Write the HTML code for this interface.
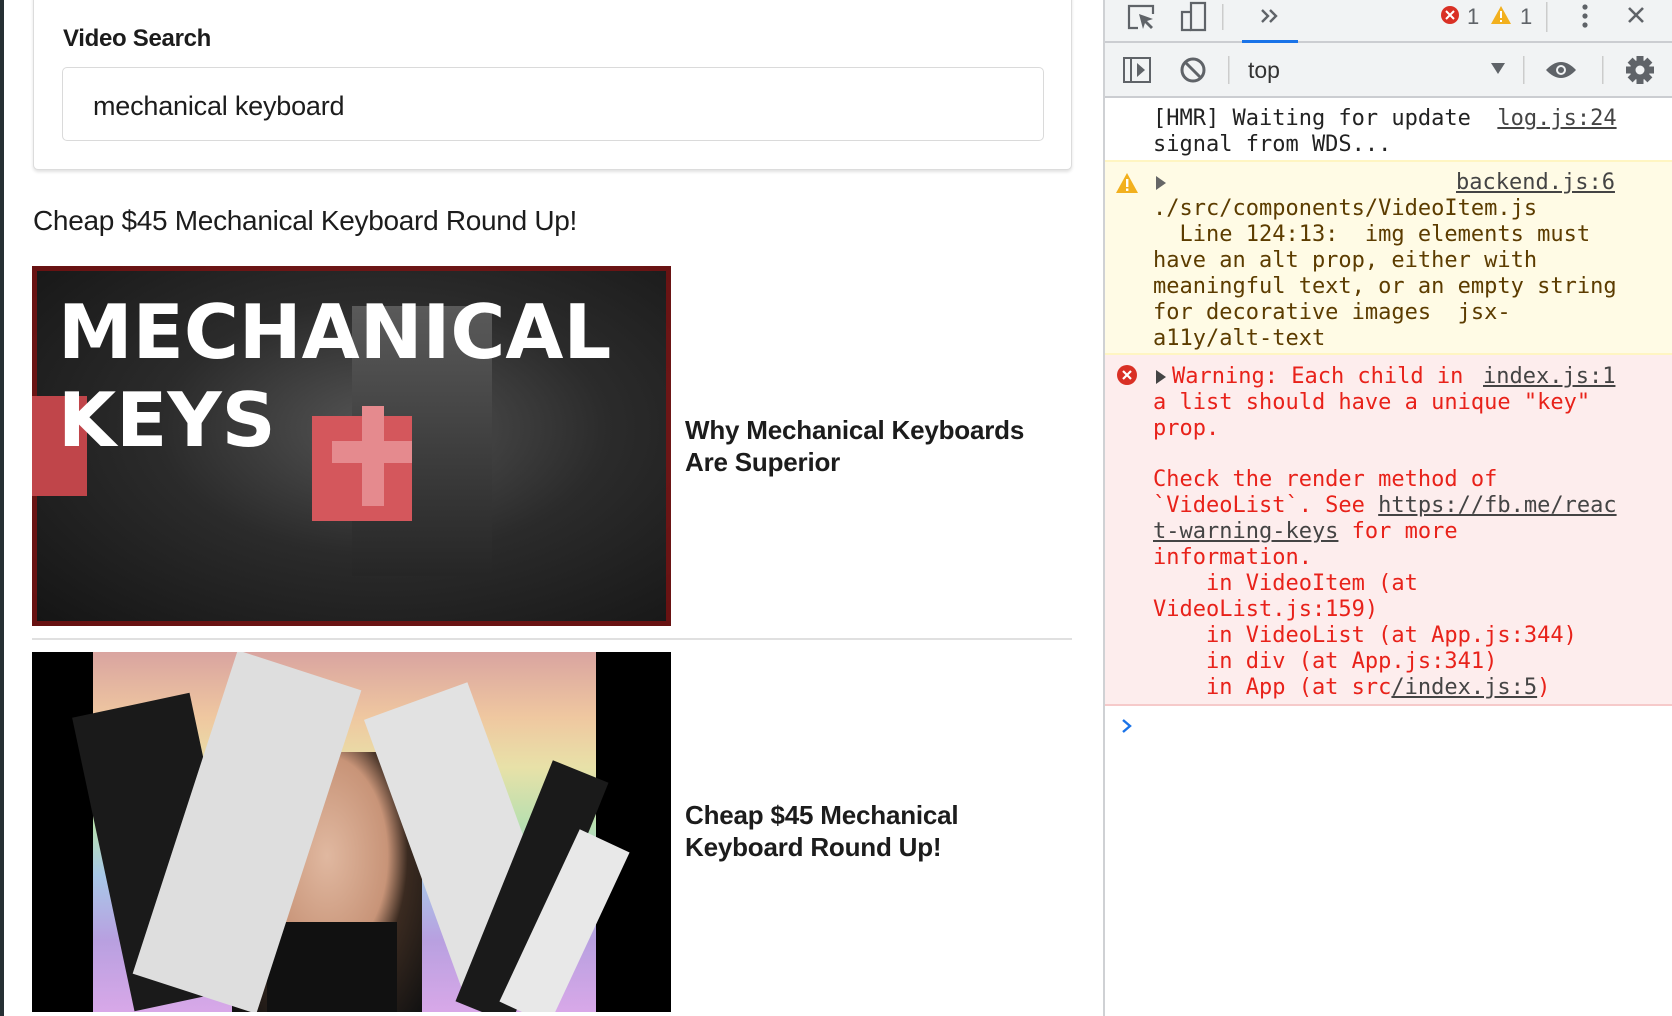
<!DOCTYPE html>
<html><head><meta charset="utf-8"><style>
*{margin:0;padding:0;box-sizing:border-box}
body{width:1672px;height:1016px;overflow:hidden;background:#fff;position:relative;font-family:"Liberation Sans",sans-serif}
.abs{position:absolute}
.strip{left:0;top:0;width:4px;height:1016px;background:#263034}
.card{left:33px;top:-10px;width:1039px;height:180px;border:1px solid #dcdcdc;border-radius:5px;box-shadow:0 2px 3px rgba(0,0,0,.12);background:#fff}
.lbl{left:63px;top:25px;font-size:24px;font-weight:bold;color:#1c1c1c;letter-spacing:-0.3px}
.inp{left:62px;top:67px;width:982px;height:74px;border:1.5px solid #dadada;border-radius:5px}
.inpt{left:93px;top:91px;font-size:27px;color:#1c1c1c;letter-spacing:-0.2px}
.title{left:33px;top:205px;font-size:28px;color:#1c1c1c;letter-spacing:-0.3px}
.vt{font-size:26px;font-weight:bold;color:#1c1c1c;line-height:32px;letter-spacing:-0.2px}
.div{left:32px;top:638px;width:1040px;height:2px;background:#e0e0e0}
.vr{left:1103px;top:0;width:2px;height:1016px;background:#cfd1d4}
.dt{left:1105px;top:0;width:567px;height:1016px;background:#fff}
.tb{left:1105px;width:567px;background:#f1f3f4;border-bottom:2px solid #cbcdd1}
.mono{font-family:"DejaVu Sans Mono",monospace;font-size:22px;white-space:pre;line-height:26px}
.ln{position:absolute;left:1153px}
.u{text-decoration:underline;color:#444}
.red{color:#e8221a}
.brn{color:#5c3c00}
</style></head><body>
<div class="abs strip"></div>
<div class="abs card"></div>
<div class="abs lbl">Video Search</div>
<div class="abs inp"></div>
<div class="abs inpt">mechanical keyboard</div>
<div class="abs title">Cheap $45 Mechanical Keyboard Round Up!</div>

<div class="abs" style="left:32px;top:266px;width:639px;height:360px;background:radial-gradient(ellipse at 55% 45%,#555 0%,#2b2b2b 45%,#141414 100%);overflow:hidden">
 <div class="abs" style="left:0;top:0;right:0;bottom:0;border:5px solid #8a1010;opacity:.7"></div>
 <div class="abs" style="left:320px;top:40px;width:140px;height:270px;background:linear-gradient(#5a5a5a,#262626)"></div>
 <div class="abs" style="left:0;top:130px;width:55px;height:100px;background:#c0454a"></div>
 <div class="abs" style="left:280px;top:150px;width:100px;height:105px;background:#d4575c"></div>
 <div class="abs" style="left:330px;top:140px;width:22px;height:100px;background:#e58a8e"></div>
 <div class="abs" style="left:300px;top:175px;width:80px;height:22px;background:#e58a8e"></div>
 <div class="abs" style="left:26px;top:22px;font-family:'DejaVu Sans',sans-serif;font-weight:bold;font-size:75px;color:#fff;line-height:88px">MECHANICAL<br>KEYS</div>
</div>
<div class="abs vt" style="left:685px;top:414px">Why Mechanical Keyboards<br>Are Superior</div>
<div class="abs div"></div>

<div class="abs" style="left:32px;top:652px;width:639px;height:360px;background:#000;overflow:hidden">
 <div class="abs" style="left:61px;top:0;width:503px;height:360px;background:linear-gradient(180deg,#d9a4a0 0%,#efc7a0 18%,#e8e1a8 32%,#b8e0b0 48%,#a8c8e8 62%,#b8a0e0 80%,#d8a8e8 100%)"></div>
 <div class="abs" style="left:200px;top:100px;width:190px;height:260px;background:radial-gradient(ellipse at 50% 40%,#e0b8a0 0%,#c89478 45%,#3a2a20 60%,#111 100%)"></div>
 <div class="abs" style="left:235px;top:270px;width:130px;height:90px;background:#111"></div>
 <div class="abs" style="left:70px;top:50px;width:120px;height:300px;background:#1a1a1a;transform:rotate(-12deg)"></div>
 <div class="abs" style="left:150px;top:10px;width:130px;height:340px;background:#dedede;transform:rotate(18deg)"></div>
 <div class="abs" style="left:380px;top:40px;width:110px;height:300px;background:#e2e2e2;transform:rotate(-20deg)"></div>
 <div class="abs" style="left:470px;top:110px;width:60px;height:260px;background:#1a1a1a;transform:rotate(22deg)"></div>
 <div class="abs" style="left:505px;top:180px;width:55px;height:190px;background:#e8e8e8;transform:rotate(25deg)"></div>
</div>
<div class="abs vt" style="left:685px;top:799px">Cheap $45 Mechanical<br>Keyboard Round Up!</div>

<div class="abs vr"></div>
<div class="abs dt"></div>
<div class="abs tb" style="top:0;height:43px"></div>
<div class="abs" style="left:1242px;top:40px;width:56px;height:3px;background:#1a73e8"></div>
<div class="abs tb" style="top:43px;height:55px"></div>

<svg class="abs" style="left:1105px;top:0" width="567" height="98" viewBox="0 0 567 98">
 <g fill="none" stroke="#5f6368" stroke-width="2.2">
  <path d="M33 28 h-9 v-22 h24 v8"/>
  <path d="M86 3 h14 v27 h-14 z" /><path d="M86 12 h-9 v18 h9"/>
 </g>
 <path d="M34 14 l14 5 -6 2 6 6 -2 2 -6 -6 -2 6z" fill="#5f6368"/>
 <path d="M157 10 l6 6 -6 6 M165 10 l6 6 -6 6" fill="none" stroke="#5f6368" stroke-width="2.4"/>
 <circle cx="345" cy="15" r="9" fill="#d93025"/>
 <path d="M341 11 l8 8 M349 11 l-8 8" stroke="#fff" stroke-width="2"/>
 <text x="362" y="24" font-family="Liberation Sans" font-size="22" fill="#5f6368">1</text>
 <path d="M396 6 l10 18 h-20z" fill="#f2b01e"/>
 <rect x="395" y="11" width="2" height="7" fill="#fff"/><rect x="395" y="20" width="2" height="2" fill="#fff"/>
 <text x="415" y="24" font-family="Liberation Sans" font-size="22" fill="#5f6368">1</text>
 <rect x="117" y="4" width="1.5" height="26" fill="#ccc"/>
 <rect x="441" y="2" width="1.5" height="30" fill="#ccc"/>
 <circle cx="480" cy="7" r="2.6" fill="#5f6368"/><circle cx="480" cy="16" r="2.6" fill="#5f6368"/><circle cx="480" cy="25" r="2.6" fill="#5f6368"/>
 <path d="M524 8 l14 14 M538 8 l-14 14" stroke="#5f6368" stroke-width="2.6"/>
 <rect x="19" y="58" width="26" height="24" fill="none" stroke="#5f6368" stroke-width="2"/>
 <rect x="25" y="58" width="2" height="24" fill="#5f6368"/>
 <path d="M32 63 l8 7 -8 7z" fill="#5f6368"/>
 <circle cx="88" cy="70" r="11" fill="none" stroke="#5f6368" stroke-width="3"/>
 <path d="M80 62 l16 16" stroke="#5f6368" stroke-width="3"/>
 <rect x="123" y="56" width="1.5" height="28" fill="#ccc"/>
 <text x="143" y="78" font-family="Liberation Sans" font-size="23" fill="#333">top</text>
 <path d="M386 63 h14 l-7 11z" fill="#5f6368"/>
 <rect x="418" y="56" width="1.5" height="28" fill="#ccc"/>
 <path d="M441 70 q15 -16 30 0 q-15 16 -30 0z" fill="#5f6368"/>
 <circle cx="456" cy="70" r="5" fill="#f1f3f4"/><circle cx="456" cy="70" r="3" fill="#5f6368"/>
 <rect x="497" y="56" width="1.5" height="28" fill="#ccc"/>
 <g transform="translate(535 70)" fill="#5f6368">
  <circle r="10"/>
  <rect x="-3.5" y="-14" width="7" height="28"/>
  <rect x="-3.5" y="-14" width="7" height="28" transform="rotate(45)"/>
  <rect x="-3.5" y="-14" width="7" height="28" transform="rotate(90)"/>
  <rect x="-3.5" y="-14" width="7" height="28" transform="rotate(135)"/>
  <circle r="4.5" fill="#f1f3f4"/>
 </g>
</svg>

<div class="mono">
 <div class="ln" style="top:106px;color:#222">[HMR] Waiting for update  <span class="u">log.js:24</span></div>
 <div class="ln" style="top:132px;color:#222">signal from WDS...</div>
</div>

<div class="abs" style="left:1105px;top:160px;width:567px;height:195px;background:#fffbe5;border-top:2px solid #fff5c2;border-bottom:2px solid #fff5c2"></div>
<svg class="abs" style="left:1115px;top:172px" width="24" height="22"><path d="M12 1 l11 20 h-22z" fill="#f2b01e"/><rect x="11" y="7" width="2.4" height="8" fill="#fff"/><rect x="11" y="16.5" width="2.4" height="2.4" fill="#fff"/></svg>
<svg class="abs" style="left:1156px;top:176px" width="12" height="14"><path d="M0 0 l10 7 -10 7z" fill="#666"/></svg>
<div class="mono brn">
 <div class="ln" style="top:170px;left:1456px"><span class="u">backend.js:6</span></div>
 <div class="ln" style="top:196px">./src/components/VideoItem.js</div>
 <div class="ln" style="top:222px">  Line 124:13:  img elements must</div>
 <div class="ln" style="top:248px">have an alt prop, either with</div>
 <div class="ln" style="top:274px">meaningful text, or an empty string</div>
 <div class="ln" style="top:300px">for decorative images  jsx-</div>
 <div class="ln" style="top:326px">a11y/alt-text</div>
</div>

<div class="abs" style="left:1105px;top:355px;width:567px;height:351px;background:#fdeded;border-bottom:2px solid #f6caca"></div>
<svg class="abs" style="left:1116px;top:364px" width="22" height="22"><circle cx="11" cy="11" r="10" fill="#d93025"/><path d="M7 7 l8 8 M15 7 l-8 8" stroke="#fff" stroke-width="2.2"/></svg>
<svg class="abs" style="left:1156px;top:370px" width="12" height="14"><path d="M0 0 l10 7 -10 7z" fill="#444"/></svg>
<div class="mono red">
 <div class="ln" style="top:364px;left:1172px">Warning: Each child in</div>
 <div class="ln" style="top:364px;left:1483px"><span class="u">index.js:1</span></div>
 <div class="ln" style="top:390px">a list should have a unique "key"</div>
 <div class="ln" style="top:416px">prop.</div>
 <div class="ln" style="top:467px">Check the render method of</div>
 <div class="ln" style="top:493px">`VideoList`. See <span class="u">https://fb.me/reac</span></div>
 <div class="ln" style="top:519px"><span class="u">t-warning-keys</span> for more</div>
 <div class="ln" style="top:545px">information.</div>
 <div class="ln" style="top:571px">    in VideoItem (at</div>
 <div class="ln" style="top:597px">VideoList.js:159)</div>
 <div class="ln" style="top:623px">    in VideoList (at App.js:344)</div>
 <div class="ln" style="top:649px">    in div (at App.js:341)</div>
 <div class="ln" style="top:675px">    in App (at src<span class="u">/index.js:5</span>)</div>
</div>
<svg class="abs" style="left:1121px;top:718px" width="12" height="16"><path d="M2 2 l7 6 -7 6" fill="none" stroke="#1a73e8" stroke-width="2.4"/></svg>
</body></html>
